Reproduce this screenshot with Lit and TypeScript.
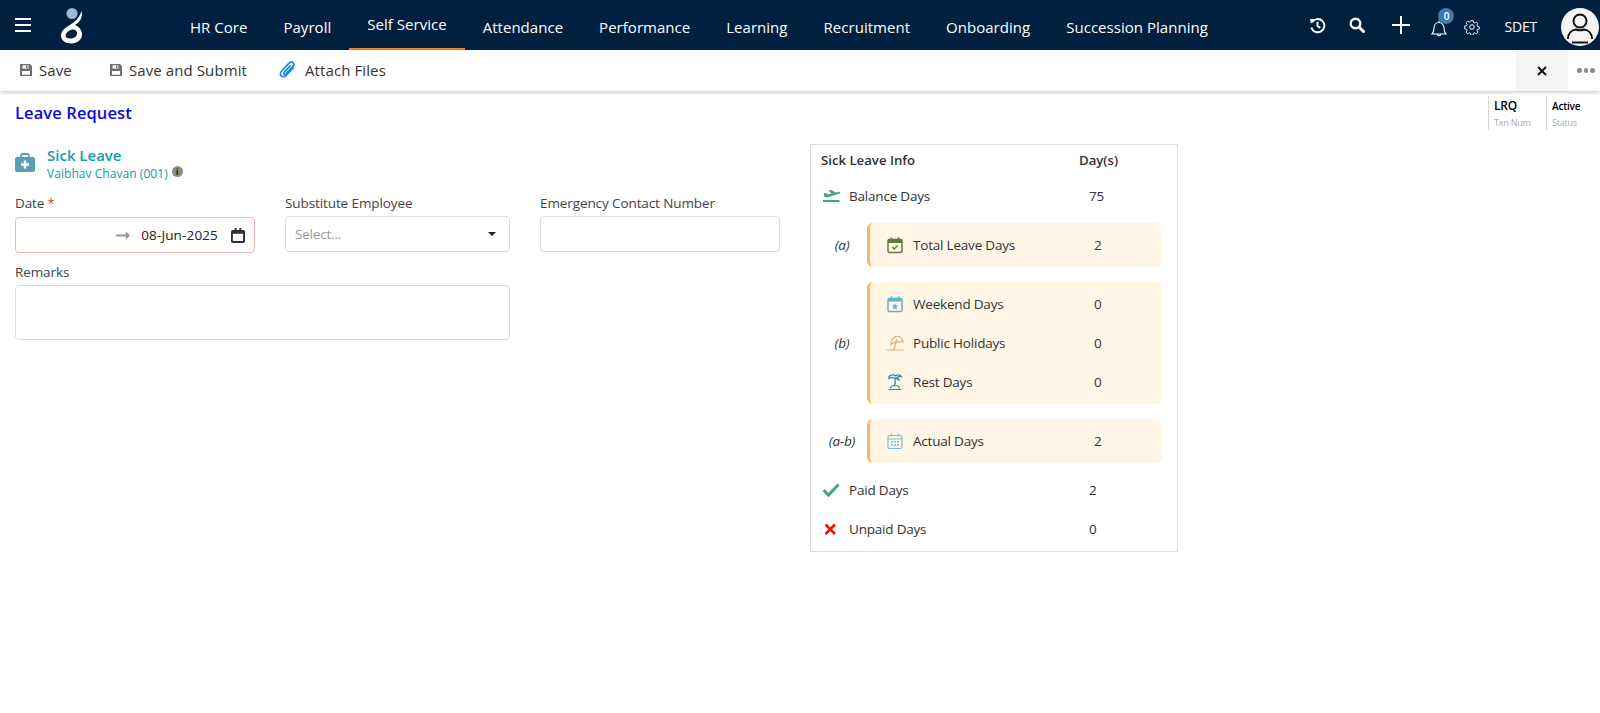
import { LitElement, css, html, svg } from 'lit'
import { customElement } from 'lit/decorators.js'

const navItems = ['HR Core', 'Payroll', 'Self Service', 'Attendance', 'Performance', 'Learning', 'Recruitment', 'Onboarding', 'Succession Planning']

const floppy = html`<svg class="floppy" viewBox="0 0 12 12"><path fill="#6f6f6f" d="M0 0h10l2 2v10H0z"/><path fill="#fff" d="M2.500 1.200h6v3.300h-6zM2 7h8v3.800H2z"/><path fill="#6f6f6f" d="M6 1.500h1.500v2.500H6z"/></svg>`

const icons = {
  plane: svg`<path fill="#3fa687" d="M1.500 6.500 4 6l2 1.500 3.500-.9-3-3L9 3l5 2.500 3-.8c1-.2 1.800.3 1.800.8s-.8 1-1.800 1.300L5.500 10.500 2.500 9.800z"/><rect x="1" y="13" width="16.500" height="2" fill="#3fa687"/>`,
  total: svg`<rect x="2" y="3.500" width="14" height="13" rx="1.500" fill="none" stroke="#5a7d3a" stroke-width="1.500"/><path fill="#5a7d3a" d="M2 3.500h14v3.500H2zM4.500 1.500h1.800v3H4.500zM11.700 1.500h1.800v3h-1.800z"/><path fill="none" stroke="#5a7d3a" stroke-width="1.300" d="m6.200 11 2 2 3.600-3.600"/>`,
  weekend: svg`<rect x="2" y="3.500" width="14" height="13" rx="1.500" fill="none" stroke="#5fb3c6" stroke-width="1.500"/><path fill="#5fb3c6" d="M2 3.500h14v3H2zM4.500 1.500h1.800v3H4.500zM11.700 1.500h1.800v3h-1.800zM9 8.200l1 2 2.200.3-1.600 1.500.4 2.200L9 13.200l-2 1 .4-2.200-1.600-1.500 2.200-.3z"/>`,
  holiday: svg`<path fill="none" stroke="#e2ad80" stroke-width="1.200" d="M5 10.500C4.500 6 8 2 12 2.500c2.500.3 4.500 2.500 5 5.500-1.200-.8-2.500-.6-3.500.3-1.200-.8-2.700-.6-3.700.6-1.500-.6-3.400.2-4.800 1.600z"/><path fill="none" stroke="#e2ad80" stroke-width="1.200" d="M10.800 5 8 15.500M.5 16h17"/>`,
  rest: svg`<path fill="none" stroke="#1f8fb0" stroke-width="1.200" d="M3 3.500C5 1.500 8 1.500 9.500 3c1.500-1.500 4.500-1.500 6 .5-1.500-.3-3 0-4.500 1 1.500.5 2 1.500 2 2.800-1.200-1-2.500-1.800-3.500-2C7.500 4.500 5 4 3 5.500zM9 5.500c.5 2.500.4 5-.5 7.500M4.500 15.500c0-2 2-3 4.500-3s4.500 1 4.500 3M2.500 16.500h13"/>`,
  actual: svg`<rect x="2" y="3.500" width="14" height="13" rx="1.500" fill="none" stroke="#7cc0d3" stroke-width="1.200"/><path fill="none" stroke="#7cc0d3" stroke-width="1.200" d="M2 7h14M5.500 1.500v3M12.500 1.500v3"/><path fill="#7cc0d3" d="M5 9h2v1.500H5zM8 9h2v1.500H8zM11 9h2v1.500h-2zM5 12h2v1.500H5zM8 12h2v1.500H8zM11 12h2v1.500h-2z"/>`,
  check: svg`<path fill="none" stroke="#3fa687" stroke-width="3" d="m1.500 9 5 5L16.500 3.500"/>`,
  cross: svg`<path fill="none" stroke="#f01010" stroke-width="2.600" d="m3.500 4.500 9.500 9.500M13 4.500 3.500 14"/>`,
}

const icon = (name: keyof typeof icons) => html`<svg class="row-icon" viewBox="0 0 18 18">${icons[name]}</svg>`

@customElement('app-root')
export class AppRoot extends LitElement {
  render() {
    return html`
      <header class="nav">
        <div class="burger"><i></i><i></i><i></i></div>
        <svg class="logo" viewBox="0 0 24 38">
          <circle cx="12" cy="6.500" r="5.500" fill="#9db9d3"/>
          <path fill="#fff" fill-rule="evenodd" d="M21.500 4C23 10 20 15 15 18c4 1.500 7 5 7 9.500 0 5.500-5 9-10.500 9C5 36.500 1 33 1 28.500 1 24 5 21 9 18.500 14 15.500 19 12 21.500 4ZM5.500 29C6 25 10 22.500 13 22.500c3 0 4.500 2.500 4 4.500-.5 3-3.500 4.500-6.500 4.500-3 0-5-1-5-2.500Z"/>
        </svg>
        <nav class="menu">
          ${navItems.map(n => html`<a class=${n === 'Self Service' ? 'active' : ''}>${n}</a>`)}
        </nav>
        <div class="tools">
          <svg class="t-history" viewBox="0 0 18 18"><path fill="none" stroke="#fff" stroke-width="2" d="M3.300 5.500A7 7 0 1 1 2.500 11M9 5v4.500l3 2"/><path fill="#fff" d="M1 2l5.500 0.500L2 7z"/></svg>
          <svg class="t-search" viewBox="0 0 16 16"><circle cx="6.500" cy="6.500" r="4.800" fill="none" stroke="#fff" stroke-width="2.400"/><path stroke="#fff" stroke-width="3" stroke-linecap="round" d="m10.500 10.500 4 4"/></svg>
          <svg class="t-plus" viewBox="0 0 18 18"><path stroke="#fff" stroke-width="2" d="M0 9h18M9 0v18"/></svg>
          <div class="bell">
            <svg viewBox="0 0 16 20"><path fill="none" stroke="#fff" stroke-width="1.100" d="M1 16c1.500-1.500 2-3 2-6 0-3 2-5.500 5-5.500s5 2.500 5 5.500c0 3 .5 4.500 2 6zM8 2.500v2M6.300 16.500a1.800 1.800 0 0 0 3.400 0"/></svg>
            <span class="badge">0</span>
          </div>
          <svg class="t-gear" viewBox="0 0 16 16"><path fill="none" stroke="#fff" stroke-width="1" d="M6.700 1h2.600l.4 2 1.400.6 1.700-1.100 1.800 1.800-1.100 1.700.6 1.400 2 .4v2.400l-2 .4-.6 1.400 1.100 1.700-1.800 1.800-1.700-1.100-1.400.6-.4 2H6.700l-.4-2-1.400-.6-1.700 1.100-1.800-1.800 1.100-1.700-.6-1.400-2-.4V6.800l2-.4.6-1.400-1.100-1.700 1.800-1.800 1.700 1.100 1.400-.6z" transform="translate(.8 .8) scale(.9)"/><circle cx="8" cy="8" r="2.300" fill="none" stroke="#fff"/></svg>
          <span class="user">SDET</span>
          <svg class="avatar" viewBox="0 0 38 38"><circle cx="19" cy="19" r="19" fill="#f5f5f5"/><circle cx="19" cy="13" r="6.500" fill="none" stroke="#111" stroke-width="2"/><path fill="none" stroke="#111" stroke-width="2" d="M7 31c0-6 4-9 8-9.500 2.500 1 5.500 1 8 0 4 .5 8 3.500 8 9.500"/><path stroke="#111" stroke-width="2" d="M11 34.500h16"/></svg>
        </div>
      </header>

      <div class="toolbar">
        <a class="tb first">${floppy}Save</a>
        <a class="tb second">${floppy}Save and Submit</a>
        <a class="tb third">
          <svg class="clip" viewBox="0 0 16 18"><path fill="none" stroke="#1e88e5" stroke-width="1.600" stroke-linecap="round" d="M13.500 7.500 6.800 14.500c-1.500 1.600-3.700 1.700-4.800.6-1.200-1.200-1-3.200.5-4.700L9.500 3c1.200-1.300 2.800-1.500 3.800-.5 1 1 .8 2.500-.3 3.700l-6.500 6.800c-.6.600-1.400.7-1.800.3-.5-.5-.3-1.200.3-1.800L10.500 5.500"/></svg>
          Attach Files
        </a>
        <span class="spacer"></span>
        <div class="close"><svg viewBox="0 0 10 10"><path stroke="#111" stroke-width="2" d="m1 1 8 8M9 1 1 9"/></svg></div>
        <div class="dots"><i></i><i></i><i></i></div>
      </div>

      <div class="heading">
        <h1>Leave Request</h1>
        <div class="meta">
          <div class="m-cell lrq"><b>LRQ</b><span>Txn Num</span></div>
          <div class="m-cell status"><b class="small">Active</b><span>Status</span></div>
        </div>
      </div>

      <main class="body">
        <section class="form">
          <div class="type">
            <svg class="kit" viewBox="0 0 20 19"><path fill="#5a9fb0" d="M2 4h16a2 2 0 0 1 2 2v11a2 2 0 0 1-2 2H2a2 2 0 0 1-2-2V6a2 2 0 0 1 2-2z"/><path fill="none" stroke="#5a9fb0" stroke-width="1.800" d="M6 5V2.500A1.500 1.500 0 0 1 7.500 1h5A1.500 1.500 0 0 1 14 2.500V5"/><path stroke="#fff" stroke-width="2.400" d="M10 7.500v8M6 11.500h8"/></svg>
            <div>
              <div class="type-name">Sick Leave</div>
              <div class="type-sub">Vaibhav Chavan (001) <span class="info">i</span></div>
            </div>
          </div>
          <div class="fields">
            <div class="field">
              <label>Date <em>*</em></label>
              <div class="input date">
                <svg class="arrow" viewBox="0 0 15 9"><path fill="#979797" d="M0 3.500h10.500V0L15 4.500 10.500 9V5.500H0z"/></svg>
                <span class="val">08-Jun-2025</span>
                <svg class="cal" viewBox="0 0 15 16"><path fill="#2b2f3a" d="M2 2h2V0h2v2h3V0h2v2h2a2 2 0 0 1 2 2v10a2 2 0 0 1-2 2H2a2 2 0 0 1-2-2V4a2 2 0 0 1 2-2zm0 4v8h11V6z"/></svg>
              </div>
            </div>
            <div class="field">
              <label>Substitute Employee</label>
              <div class="input select"><span class="ph">Select...</span><i class="caret"></i></div>
            </div>
            <div class="field">
              <label>Emergency Contact Number</label>
              <div class="input"></div>
            </div>
            <div class="field wide">
              <label>Remarks</label>
              <div class="input area"></div>
            </div>
          </div>
        </section>

        <aside class="card">
          <div class="row head"><span class="r-name">Sick Leave Info</span><span class="r-val">Day(s)</span></div>
          <div class="row plain">${icon('plane')}<span class="r-name">Balance Days</span><span class="r-val">75</span></div>
          <div class="grp g-a">
            <span class="tag">(a)</span>
            <div class="box">
              <div class="in">${icon('total')}<span class="r-name">Total Leave Days</span><span class="r-val">2</span></div>
            </div>
          </div>
          <div class="grp g-b">
            <span class="tag">(b)</span>
            <div class="box">
              <div class="in">${icon('weekend')}<span class="r-name">Weekend Days</span><span class="r-val">0</span></div>
              <div class="in">${icon('holiday')}<span class="r-name">Public Holidays</span><span class="r-val">0</span></div>
              <div class="in">${icon('rest')}<span class="r-name">Rest Days</span><span class="r-val">0</span></div>
            </div>
          </div>
          <div class="grp g-c">
            <span class="tag">(a-b)</span>
            <div class="box">
              <div class="in">${icon('actual')}<span class="r-name">Actual Days</span><span class="r-val">2</span></div>
            </div>
          </div>
          <div class="row plain paid">${icon('check')}<span class="r-name">Paid Days</span><span class="r-val">2</span></div>
          <div class="row plain unpaid">${icon('cross')}<span class="r-name">Unpaid Days</span><span class="r-val">0</span></div>
        </aside>
      </main>
    `
  }

  static styles = css`
    :host {
      display: block;
      font-family: "Open Sans", "Noto Sans", sans-serif;
      font-size: 13px;
      letter-spacing: -0.2px;
      color: #333;
      background: #fff;
      min-height: 713px;
    }

    .nav {
      display: flex;
      align-items: center;
      height: 50px;
      background: #012040;
      color: #fff;
    }
    .burger {
      display: flex;
      flex-direction: column;
      gap: 4px;
      width: 16px;
      margin-left: 15px;
    }
    .burger i {
      height: 2px;
      background: #fff;
    }
    .logo {
      width: 24px;
      height: 38px;
      margin-left: 29px;
      margin-top: 1px;
    }
    .menu {
      display: flex;
      height: 50px;
      margin-left: 88px;
      font-size: 15px;
      letter-spacing: 0.03px;
    }
    .menu a {
      display: flex;
      align-items: center;
      padding: 3px 18px 0;
      box-sizing: border-box;
    }
    .menu a.active {
      padding-top: 0;
      border-bottom: 2px solid #f58220;
      padding-bottom: 1px;
    }
    .tools {
      display: flex;
      align-items: center;
      margin-left: auto;
      height: 50px;
    }
    .t-history { width: 17px; height: 17px; margin-right: 23px; }
    .t-search { width: 16px; height: 16px; margin-right: 27px; }
    .t-plus { width: 18px; height: 18px; margin-right: 21px; }
    .bell {
      position: relative;
      width: 16px;
      height: 20px;
      margin-top: 5px;
      margin-right: 17px;
    }
    .bell svg { width: 16px; height: 20px; display: block; }
    .badge {
      position: absolute;
      left: 7px;
      top: -10px;
      width: 16px;
      height: 16px;
      border-radius: 50%;
      background: #3b7ab5;
      font-size: 10px;
      line-height: 16px;
      font-weight: 600;
      text-align: center;
    }
    .t-gear { width: 16px; height: 16px; margin-right: 24px; margin-top: 4px; }
    .user { font-size: 14px; margin-right: 24px; margin-top: 3px; }
    .avatar { width: 38px; height: 38px; margin-right: 1px; margin-top: 4px; }

    .toolbar {
      display: flex;
      align-items: center;
      height: 41px;
      background: #fff;
      box-shadow: 0 1px 4px rgba(0, 0, 0, 0.25);
      position: relative;
      font-size: 15px;
      letter-spacing: 0.1px;
    }
    .tb {
      display: flex;
      align-items: center;
      margin-top: -2px;
    }
    .floppy { width: 12px; height: 12px; margin-right: 7px; }
    .first { margin-left: 20px; }
    .second { margin-left: 38px; }
    .third { margin-left: 32px; }
    .clip { width: 17px; height: 19px; margin-right: 9px; }
    .spacer { flex: 1; }
    .close {
      display: flex;
      align-items: center;
      justify-content: center;
      width: 52px;
      height: 41px;
      background: #f4f4f4;
    }
    .close svg { width: 10px; height: 10px; }
    .dots {
      display: flex;
      gap: 2px;
      width: 32px;
      padding-left: 9px;
      box-sizing: border-box;
    }
    .dots i {
      width: 4.500px;
      height: 4.500px;
      border-radius: 50%;
      background: #8a8a8a;
    }

    .heading {
      display: flex;
      justify-content: space-between;
      align-items: flex-start;
      padding-left: 15px;
    }
    h1 {
      margin: 11px 0 0;
      font-size: 16.500px;
      line-height: 22px;
      font-weight: 600;
      letter-spacing: 0.1px;
      color: #0a0ae6;
    }
    .meta {
      display: flex;
      margin-top: 5px;
    }
    .m-cell {
      display: flex;
      flex-direction: column;
      height: 34px;
      border-left: 1px solid #d5d5d5;
      padding: 1px 0 0 5px;
      box-sizing: border-box;
    }
    .lrq { width: 58px; }
    .status { width: 54px; }
    .m-cell b {
      font-size: 12px;
      line-height: 18px;
      font-weight: 600;
      color: #000;
    }
    .m-cell b.small { font-size: 10px; }
    .m-cell span {
      font-size: 9px;
      line-height: 14px;
      margin-top: 1px;
      color: #aaa;
    }

    .body {
      display: flex;
      align-items: flex-start;
      padding-left: 15px;
      margin-top: 14px;
    }
    .form {
      width: 765px;
      padding-top: 1px;
    }
    .type {
      display: flex;
      gap: 12px;
    }
    .kit {
      width: 20px;
      height: 19px;
      margin-top: 8px;
    }
    .type-name {
      font-size: 15px;
      font-weight: 600;
      line-height: 20px;
      letter-spacing: 0;
      color: #0e9ea6;
    }
    .type-sub {
      display: flex;
      align-items: center;
      gap: 4px;
      font-size: 12px;
      line-height: 16px;
      letter-spacing: 0.05px;
      color: #0e9ea6;
      margin-top: 1px;
    }
    .info {
      display: inline-block;
      width: 11px;
      height: 11px;
      border-radius: 50%;
      background: #8c8c8c;
      color: #111;
      font-size: 8px;
      line-height: 11px;
      font-weight: 700;
      text-align: center;
      margin-top: -6px;
      letter-spacing: 0;
    }
    .fields {
      display: grid;
      grid-template-columns: 240px 225px 240px;
      column-gap: 30px;
      row-gap: 9px;
      margin-top: 11px;
    }
    .field.wide { grid-column: 1 / span 2; }
    label {
      display: block;
      font-size: 13.500px;
      line-height: 20px;
      letter-spacing: -0.1px;
      margin-bottom: 3px;
      color: #444;
    }
    label em { color: #d0342c; font-style: normal; font-size: 12px; }
    .input {
      display: flex;
      align-items: center;
      height: 36px;
      border: 1px solid #dcdcdc;
      border-radius: 4px;
      box-sizing: border-box;
      background: #fff;
      font-size: 13.500px;
    }
    .date {
      border-color: #f5b5b5;
      justify-content: flex-end;
      padding-right: 9px;
      color: #222;
    }
    .arrow { width: 14px; height: 9px; margin-right: 11px; }
    .val { letter-spacing: 0.15px; }
    .cal { width: 14px; height: 15px; margin-left: 13px; }
    .select {
      justify-content: space-between;
      padding: 0 13px 0 9px;
    }
    .ph { color: #9a9a9a; }
    .caret {
      width: 0;
      height: 0;
      border-left: 4px solid transparent;
      border-right: 4px solid transparent;
      border-top: 4px solid #222;
    }
    .area { height: 55px; }

    .card {
      width: 368px;
      height: 408px;
      margin-left: 30px;
      border: 1px solid #dcdcdc;
      box-sizing: border-box;
      padding: 0 15px 0 10px;
      display: flex;
      flex-direction: column;
    }
    .row {
      display: flex;
      align-items: center;
    }
    .row-icon {
      width: 18px;
      height: 18px;
      flex: none;
    }
    .r-name,
    .r-val {
      font-size: 13.500px;
    }
    .head {
      height: 31px;
      padding-bottom: 2px;
      box-sizing: border-box;
      font-weight: 600;
      letter-spacing: 0;
      color: #333;
    }
    .head .r-name { width: 258px; }
    .head .r-name,
    .head .r-val { font-size: 13.200px; }
    .plain { height: 39px; flex: none; }
    .plain .row-icon { margin-right: 9px; margin-left: 1px; }
    .plain .r-name { width: 240px; }
    .grp {
      display: flex;
      align-items: center;
    }
    .tag {
      width: 44px;
      margin: 0 3px 0 -1px;
      text-align: center;
      font-style: italic;
      font-size: 13.500px;
      flex: none;
    }
    .box {
      flex: 1;
      background: #fff6e5;
      border-left: 3px solid #f4bb63;
      border-radius: 6px;
      padding: 2.500px 0 2.500px 16px;
      box-sizing: border-box;
    }
    .in {
      display: flex;
      align-items: center;
      height: 39px;
    }
    .in .row-icon { margin-right: 9px; }
    .in .r-name { width: 181px; }
    .g-a { margin-top: 8px; }
    .g-b { margin-top: 15px; }
    .g-c { margin-top: 15px; }
    .paid { margin-top: 7px; }
  `
}

declare global {
  interface HTMLElementTagNameMap {
    'app-root': AppRoot
  }
}
